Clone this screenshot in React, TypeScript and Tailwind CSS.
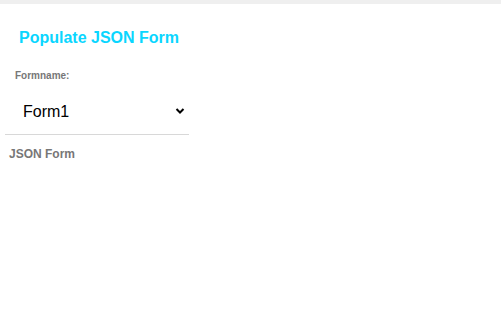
export default function App() {
  return (
    <div className="min-h-screen bg-white" style={{ fontFamily: "Arial, 'Liberation Sans', sans-serif" }}>
      <div className="h-[4px] bg-[#efefef]" />
      <div className="px-[5px]">
        <h1 className="pl-[14px] pt-[24px] text-[16px] leading-[20px] font-bold text-[#0ad6ff]">
          Populate JSON Form
        </h1>
        <label className="block pl-[10px] pt-[21px] text-[10px] leading-[14px] font-bold text-[#777]">
          Formname:
        </label>
        <div className="w-[184px] mt-[6px] border-b border-[#d8d8d8] flex items-center justify-between pl-[18px] pr-[4px] h-[46px]">
          <span className="text-[16px] text-black">Form1</span>
          <svg width="10" height="8" viewBox="0 0 10 8" className="mb-[2px]">
            <path d="M1.5 2 L5 5.5 L8.5 2" fill="none" stroke="#000" strokeWidth="2" />
          </svg>
        </div>
        <div className="pl-[4px] pt-[12px] text-[12px] leading-[14px] font-bold text-[#777]">JSON Form</div>
      </div>
    </div>
  );
}
